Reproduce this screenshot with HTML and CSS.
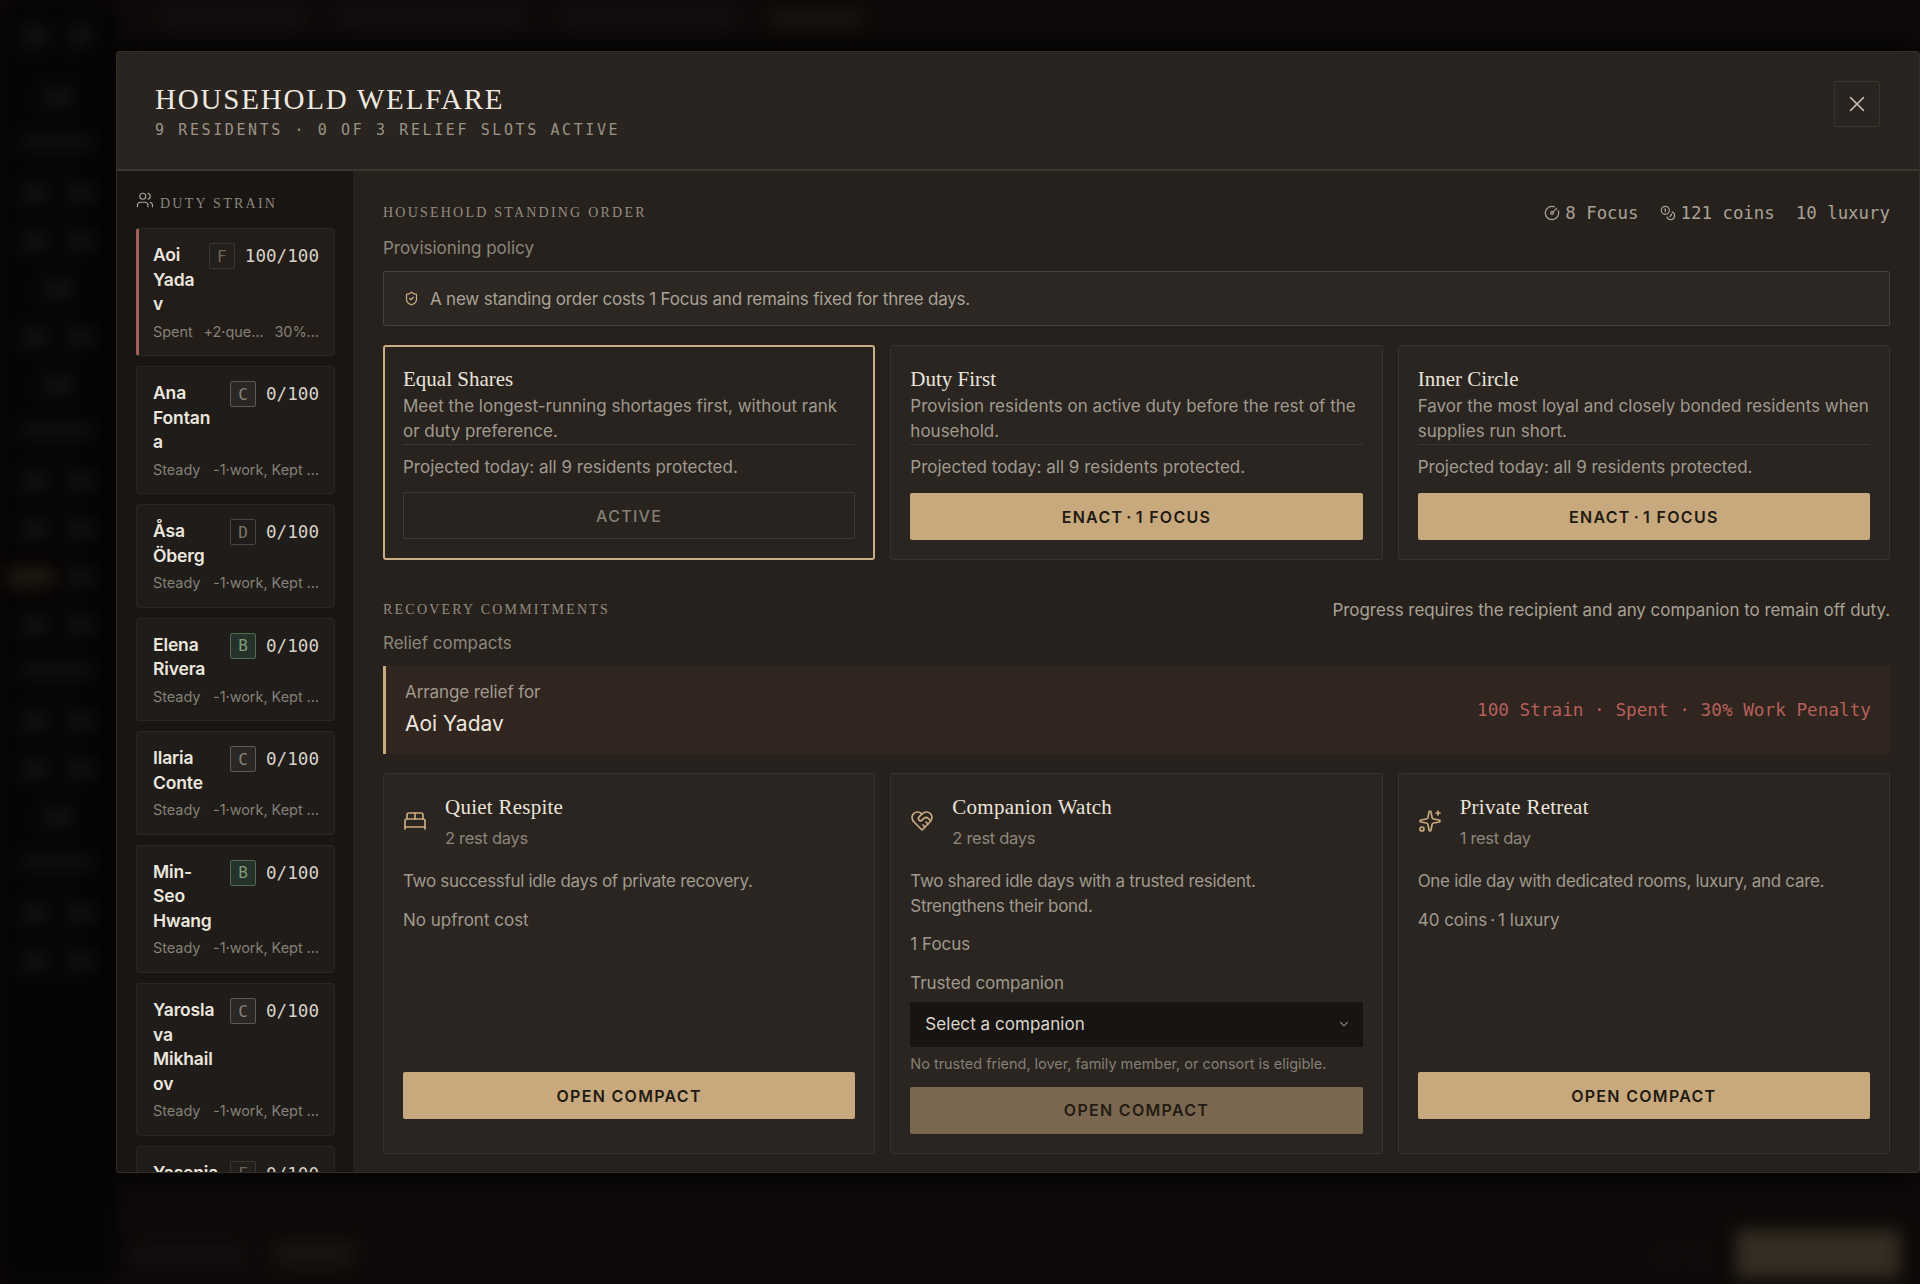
FILE: index.html
```html
<!DOCTYPE html>
<html lang="en">
<head>
<meta charset="utf-8">
<title>Household Welfare</title>
<link rel="stylesheet" href="styles.css">
</head>
<body>
<div class="backdrop" aria-hidden="true">
  <div class="rail">
    <div class="rail-row rail-first"><i class="blob"></i><i class="blob"></i></div>
    <div class="rail-row"><i class="blob center"></i></div>
    <div class="rail-row"><i class="blob wide"></i></div>
    <div class="rail-row"><i class="blob"></i><i class="blob"></i></div>
    <div class="rail-row"><i class="blob"></i><i class="blob"></i></div>
    <div class="rail-row"><i class="blob center"></i></div>
    <div class="rail-row"><i class="blob"></i><i class="blob"></i></div>
    <div class="rail-row"><i class="blob center"></i></div>
    <div class="rail-row"><i class="blob wide"></i></div>
    <div class="rail-row"><i class="blob"></i><i class="blob"></i></div>
    <div class="rail-row"><i class="blob"></i><i class="blob"></i></div>
    <div class="rail-row"><i class="blob amber"></i><i class="blob"></i></div>
    <div class="rail-row"><i class="blob"></i><i class="blob"></i></div>
    <div class="rail-row"><i class="blob wide"></i></div>
    <div class="rail-row"><i class="blob"></i><i class="blob"></i></div>
    <div class="rail-row"><i class="blob"></i><i class="blob"></i></div>
    <div class="rail-row"><i class="blob center"></i></div>
    <div class="rail-row"><i class="blob wide"></i></div>
    <div class="rail-row"><i class="blob"></i><i class="blob"></i></div>
    <div class="rail-row"><i class="blob"></i><i class="blob"></i></div>
  </div>
  <div class="page-behind">
    <div class="top-nav"><i class="bar n1"></i><i class="bar n2"></i><i class="bar n3"></i><i class="bar n4"></i></div>
    <div class="bottom-bar">
      <i class="bar b1"></i><i class="bar b2"></i>
      <span class="bottom-spacer"></span>
      <i class="bar b3"></i><i class="bar b3"></i><i class="bar b4"></i>
    </div>
  </div>
</div>

<section class="modal">
  <header class="modal-head">
    <div>
      <h1 class="modal-title">HOUSEHOLD WELFARE</h1>
      <p class="modal-sub">9 RESIDENTS · 0 OF 3 RELIEF SLOTS ACTIVE</p>
    </div>
    <button class="close" aria-label="Close">
      <svg class="ic ic-close" viewBox="0 0 24 24"><path d="M18 6 6 18"/><path d="m6 6 12 12"/></svg>
    </button>
  </header>
  <div class="modal-body">
    <aside class="side">
      <div class="side-head">
        <svg class="ic ic-users" viewBox="0 0 24 24"><path d="M16 21v-2a4 4 0 0 0-4-4H6a4 4 0 0 0-4 4v2"/><circle cx="9" cy="7" r="4"/><path d="M22 21v-2a4 4 0 0 0-3-3.87"/><path d="M16 3.13a4 4 0 0 1 0 7.75"/></svg>
        <span class="side-title">DUTY STRAIN</span>
      </div>
      <article class="res res-alert">
        <div class="res-top"><span class="res-name">Aoi<br>Yada<br>v</span><span class="grade grade-f">F</span><span class="res-val">100/100</span></div>
        <div class="res-meta"><span>Spent</span><span>+2·que...</span><span>30%...</span></div>
      </article>
      <article class="res">
        <div class="res-top"><span class="res-name">Ana<br>Fontan<br>a</span><span class="grade grade-c">C</span><span class="res-val">0/100</span></div>
        <div class="res-meta"><span>Steady</span><span>-1·work, Kept ...</span></div>
      </article>
      <article class="res">
        <div class="res-top"><span class="res-name">Åsa<br>Öberg</span><span class="grade grade-d">D</span><span class="res-val">0/100</span></div>
        <div class="res-meta"><span>Steady</span><span>-1·work, Kept ...</span></div>
      </article>
      <article class="res">
        <div class="res-top"><span class="res-name">Elena<br>Rivera</span><span class="grade grade-b">B</span><span class="res-val">0/100</span></div>
        <div class="res-meta"><span>Steady</span><span>-1·work, Kept ...</span></div>
      </article>
      <article class="res">
        <div class="res-top"><span class="res-name">Ilaria<br>Conte</span><span class="grade grade-c">C</span><span class="res-val">0/100</span></div>
        <div class="res-meta"><span>Steady</span><span>-1·work, Kept ...</span></div>
      </article>
      <article class="res">
        <div class="res-top"><span class="res-name">Min-<br>Seo<br>Hwang</span><span class="grade grade-b">B</span><span class="res-val">0/100</span></div>
        <div class="res-meta"><span>Steady</span><span>-1·work, Kept ...</span></div>
      </article>
      <article class="res">
        <div class="res-top"><span class="res-name">Yarosla<br>va<br>Mikhail<br>ov</span><span class="grade grade-c">C</span><span class="res-val">0/100</span></div>
        <div class="res-meta"><span>Steady</span><span>-1·work, Kept ...</span></div>
      </article>
      <article class="res">
        <div class="res-top"><span class="res-name">Yasenia</span><span class="grade grade-f">F</span><span class="res-val">0/100</span></div>
        <div class="res-meta"><span>Steady</span><span>-1·work, Kept ...</span></div>
      </article>
    </aside>

    <main class="main">
      <div class="sec-head">
        <h2 class="sec-label">HOUSEHOLD STANDING ORDER</h2>
        <div class="stats">
          <span class="stat"><svg class="ic ic-stat" viewBox="0 0 24 24"><path d="M15.6 2.7a10 10 0 1 0 5.7 5.7"/><circle cx="12" cy="12" r="2"/><path d="M13.4 10.6 19 5"/></svg>8 Focus</span>
          <span class="stat"><svg class="ic ic-stat" viewBox="0 0 24 24"><circle cx="8" cy="8" r="6"/><path d="M18.09 10.37A6 6 0 1 1 10.34 18"/><path d="M7 6h1v4"/><path d="m16.71 13.88.7.71-2.82 2.82"/></svg>121 coins</span>
          <span class="stat">10 luxury</span>
        </div>
      </div>
      <p class="sec-sub">Provisioning policy</p>
      <div class="notice">
        <svg class="ic ic-shield" viewBox="0 0 24 24"><path d="M20 13c0 5-3.5 7.5-7.66 8.95a1 1 0 0 1-.67-.01C7.5 20.5 4 18 4 13V6a1 1 0 0 1 1-1c2 0 4.5-1.2 6.24-2.72a1.17 1.17 0 0 1 1.52 0C14.51 3.81 17 5 19 5a1 1 0 0 1 1 1z"/><path d="m9 12 2 2 4-4"/></svg>
        <span>A new standing order costs 1 Focus and remains fixed for three days.</span>
      </div>

      <div class="cols orders">
        <article class="card order order-active">
          <h3 class="card-title">Equal Shares</h3>
          <p class="order-desc">Meet the longest-running shortages first, without rank or duty preference.</p>
          <p class="order-proj">Projected today: all 9 residents protected.</p>
          <div class="btn btn-ghost">ACTIVE</div>
        </article>
        <article class="card order">
          <h3 class="card-title">Duty First</h3>
          <p class="order-desc">Provision residents on active duty before the rest of the household.</p>
          <p class="order-proj">Projected today: all 9 residents protected.</p>
          <button class="btn">ENACT<span class="sep">·</span>1 FOCUS</button>
        </article>
        <article class="card order">
          <h3 class="card-title">Inner Circle</h3>
          <p class="order-desc">Favor the most loyal and closely bonded residents when supplies run short.</p>
          <p class="order-proj">Projected today: all 9 residents protected.</p>
          <button class="btn">ENACT<span class="sep">·</span>1 FOCUS</button>
        </article>
      </div>

      <div class="sec-head sec-head-2">
        <h2 class="sec-label">RECOVERY COMMITMENTS</h2>
        <p class="sec-note">Progress requires the recipient and any companion to remain off duty.</p>
      </div>
      <p class="sec-sub sec-sub-2">Relief compacts</p>
      <div class="banner">
        <div>
          <p class="banner-label">Arrange relief for</p>
          <p class="banner-name">Aoi Yadav</p>
        </div>
        <p class="banner-state">100 Strain · Spent · 30% Work Penalty</p>
      </div>

      <div class="cols compacts">
        <article class="card compact">
          <div class="compact-head">
            <svg class="ic ic-card" viewBox="0 0 24 24"><path d="M2 20v-8a2 2 0 0 1 2-2h16a2 2 0 0 1 2 2v8"/><path d="M4 10V6a2 2 0 0 1 2-2h12a2 2 0 0 1 2 2v4"/><path d="M12 4v6"/><path d="M2 18h20"/></svg>
            <div><h3 class="card-title compact-title">Quiet Respite</h3><p class="compact-days">2 rest days</p></div>
          </div>
          <p class="compact-text">Two successful idle days of private recovery.</p>
          <p class="compact-cost">No upfront cost</p>
          <button class="btn btn-end">OPEN COMPACT</button>
        </article>
        <article class="card compact">
          <div class="compact-head">
            <svg class="ic ic-card" viewBox="0 0 24 24"><path d="M19 14c1.49-1.46 3-3.21 3-5.5A5.5 5.5 0 0 0 16.5 3c-1.76 0-3 .5-4.5 2-1.5-1.5-2.74-2-4.5-2A5.5 5.5 0 0 0 2 8.5c0 2.3 1.5 4.05 3 5.5l7 7Z"/><path d="M12 5 9.04 7.96a2.17 2.17 0 0 0 0 3.08c.82.82 2.13.85 3 .07l2.07-1.9a2.82 2.82 0 0 1 3.79 0l2.96 2.66"/><path d="m18 15-2-2"/><path d="m15 18-2-2"/></svg>
            <div><h3 class="card-title compact-title">Companion Watch</h3><p class="compact-days">2 rest days</p></div>
          </div>
          <p class="compact-text">Two shared idle days with a trusted resident.<br>Strengthens their bond.</p>
          <p class="compact-cost">1 Focus</p>
          <p class="field-label">Trusted companion</p>
          <div class="select">
            <span>Select a companion</span>
            <svg class="ic ic-chev" viewBox="0 0 24 24"><path d="m6 9 6 6 6-6"/></svg>
          </div>
          <p class="field-help">No trusted friend, lover, family member, or consort is eligible.</p>
          <button class="btn btn-disabled">OPEN COMPACT</button>
        </article>
        <article class="card compact">
          <div class="compact-head">
            <svg class="ic ic-card" viewBox="0 0 24 24"><path d="M11.017 2.814a1 1 0 0 1 1.966 0l1.051 5.558a2 2 0 0 0 1.594 1.594l5.558 1.051a1 1 0 0 1 0 1.966l-5.558 1.051a2 2 0 0 0-1.594 1.594l-1.051 5.558a1 1 0 0 1-1.966 0l-1.051-5.558a2 2 0 0 0-1.594-1.594l-5.558-1.051a1 1 0 0 1 0-1.966l5.558-1.051a2 2 0 0 0 1.594-1.594z"/><path d="M20 2v4"/><path d="M22 4h-4"/><circle cx="4" cy="20" r="2"/></svg>
            <div><h3 class="card-title compact-title">Private Retreat</h3><p class="compact-days">1 rest day</p></div>
          </div>
          <p class="compact-text">One idle day with dedicated rooms, luxury, and care.</p>
          <p class="compact-cost">40 coins<span class="sep">·</span>1 luxury</p>
          <button class="btn btn-end">OPEN COMPACT</button>
        </article>
      </div>
    </main>
  </div>
</section>
</body>
</html>
```
FILE: styles.css
```css
* { box-sizing: border-box; }
html, body { margin: 0; height: 100%; }
body {
  width: 1920px;
  height: 1284px;
  overflow: hidden;
  background: #0d0a09;
  color: #e8e2d8;
  font-family: Inter, "Noto Sans", sans-serif;
  position: relative;
}
h1, h2, h3, p { margin: 0; font-weight: 400; }
button { font: inherit; border: 0; }
.sep { margin: 0 3px; }

/* blurred page behind the dialog */
.backdrop { display: flex; height: 100%; }
.rail {
  width: 116px;
  flex: none;
  background: #060404;
  padding: 22px 16px 0;
  display: flex;
  flex-direction: column;
  gap: 18px;
  filter: blur(8px);
}
.rail-row { display: flex; justify-content: space-between; height: 30px; padding: 4px 6px; }
.rail-first { margin-bottom: 13px; }
.blob { width: 26px; height: 20px; background: #131010; border-radius: 4px; display: block; }
.blob.wide { width: 100%; height: 14px; }
.blob.center { margin: 0 auto; width: 30px; }
.blob.amber { background: #1e1910; width: 46px; margin-left: -14px; }
.page-behind {
  flex: 1;
  display: flex;
  flex-direction: column;
  justify-content: space-between;
  filter: blur(8px);
}
.top-nav { display: flex; gap: 30px; padding: 12px 0 0 40px; }
.bar { display: block; height: 16px; background: #131110; }
.n1 { width: 150px; }
.n2 { width: 190px; }
.n3 { width: 184px; }
.n4 { width: 92px; background: #1b1610; }
.bottom-bar { display: flex; align-items: center; gap: 30px; height: 60px; padding: 0 20px 0 18px; }
.bottom-spacer { flex: 1; }
.b1 { width: 110px; }
.b2 { width: 80px; background: #171412; height: 26px; }
.b3 { width: 16px; margin-right: -12px; }
.b4 { width: 164px; height: 48px; background: #352c22; margin-left: 10px; }

/* dialog */
.modal {
  position: absolute;
  left: 116px;
  top: 51px;
  width: 1804px;
  height: 1122px;
  background: #26211d;
  border: 1px solid #33302b;
  border-radius: 3px;
  display: flex;
  flex-direction: column;
  overflow: hidden;
  box-shadow: 0 0 30px #000;
}
.modal-head {
  height: 119px;
  flex: none;
  padding: 30px 39px 0 38px;
  display: flex;
  justify-content: space-between;
  align-items: flex-start;
  background: #29241f;
  border-bottom: 2px solid #3b352f;
}
.modal-title {
  font-family: "Liberation Serif", serif;
  font-size: 29px;
  line-height: 34px;
  letter-spacing: 1.8px;
  color: #eee9e0;
}
.modal-sub {
  font-family: "DejaVu Sans Mono", monospace;
  font-size: 15px;
  line-height: 18px;
  letter-spacing: 2.6px;
  margin-top: 5px;
  color: #9a9388;
}
.close {
  width: 46px;
  height: 46px;
  margin-top: -1px;
  background: transparent;
  border: 1px solid #3a352f;
  border-radius: 2px;
  display: flex;
  align-items: center;
  justify-content: center;
  padding: 0;
}
.ic { fill: none; stroke: currentColor; stroke-width: 2; stroke-linecap: round; stroke-linejoin: round; flex: none; display: block; }
.ic-close { width: 26px; height: 26px; color: #c9c2b6; stroke-width: 1.4; }

.modal-body { flex: 1; min-height: 0; display: flex; }
.side {
  width: 237px;
  flex: none;
  background: #181513;
  border-right: 1px solid #26221e;
  padding: 20px 18px 0 19px;
  overflow: hidden;
  display: flex;
  flex-direction: column;
  gap: 10px;
}
.side > * { flex: none; }
.side-head { display: flex; align-items: flex-start; gap: 6px; height: 28px; color: #a9a296; margin-bottom: -1px; }
.ic-users { width: 18px; height: 18px; stroke-width: 1.6; }
.side-title {
  font-family: "Liberation Serif", serif;
  font-size: 14px;
  letter-spacing: 2.25px;
  line-height: 20px;
  margin-top: 3px;
  color: #8d867a;
}
.res {
  background: #201c19;
  border: 1px solid #2a2622;
  border-radius: 3px;
  padding: 14px 15px 13.6px 16px;
}
.res-alert { border-left: 3px solid #a8605f; padding-left: 14px; background: #231d1a; }
.res-top { display: flex; align-items: flex-start; gap: 10px; }
.res-name { flex: 1; min-width: 0; font-size: 17.5px; line-height: 24.5px; font-weight: 600; color: #ece7de; letter-spacing: -.15px; }
.grade {
  width: 26px;
  height: 26px;
  flex: none;
  display: flex;
  align-items: center;
  justify-content: center;
  font-family: "DejaVu Sans Mono", monospace;
  font-size: 16px;
  border: 1px solid #4a453e;
  border-radius: 2px;
  color: #8e887e;
}
.grade-f { border-color: #3b3630; background: #241f1b; color: #6f685e; }
.grade-c { border-color: #5e5a53; background: #2a2725; color: #88837a; }
.grade-d { border-color: #4a453e; background: #201c19; color: #7e786e; }
.grade-b { border-color: #4f6a4d; background: #25322a; color: #7d9a78; }
.res-val { font-family: "DejaVu Sans Mono", monospace; font-size: 17.6px; line-height: 26px; color: #d8d2c8; }
.res-meta {
  display: flex;
  justify-content: space-between;
  gap: 8px;
  margin-top: 4px;
  font-size: 14.5px;
  line-height: 21px;
  color: #858076;
  white-space: nowrap;
  letter-spacing: -.05px;
}

.main { flex: 1; min-width: 0; padding: 29px 29px 0; background: #26211d; }
.sec-head { display: flex; justify-content: space-between; align-items: center; height: 26px; }
.sec-label {
  font-family: "Liberation Serif", serif;
  font-size: 14px;
  letter-spacing: 2.22px;
  color: #948d80;
}
.stats { display: flex; gap: 21px; font-family: "DejaVu Sans Mono", monospace; font-size: 17.4px; color: #a9a296; }
.stat { display: flex; align-items: center; gap: 5px; }
.ic-stat { width: 16px; height: 16px; stroke-width: 1.8; }
.sec-sub { font-size: 17px; line-height: 26px; color: #8d867a; margin-top: 9px; }
.sec-sub-2 { margin-top: 7px; }
.notice {
  height: 55px;
  margin-top: 10px;
  border: 1px solid #47423b;
  border-radius: 2px;
  background: #2c2722;
  padding-left: 20px;
  display: flex;
  align-items: center;
  gap: 11px;
  font-size: 17px;
  letter-spacing: -.2px;
  color: #a9a296;
}
.ic-shield { width: 15px; height: 15px; color: #c8a97e; }
.cols { display: grid; grid-template-columns: repeat(3, 1fr); gap: 15px; }
.orders { margin-top: 19px; }
.card { background: #2a2521; border: 1px solid #38332d; border-radius: 3px; padding: 19px; }
.card-title { font-family: "Liberation Serif", serif; font-size: 21px; line-height: 28px; color: #eae4da; }
.compact-title { letter-spacing: .25px; }
.order { height: 215px; display: flex; flex-direction: column; padding-top: 19px; }
.order-active { border: 2px solid #c8ad86; padding: 18px 18px 19px; background: #28231f; }
.order-desc { font-size: 17px; line-height: 24.5px; color: #a09a8e; margin-top: 1px; padding-bottom: 1px; border-bottom: 1px solid #3a352f; }
.order-proj { font-size: 17px; line-height: 24px; color: #a09a8e; margin-top: 10px; }
.btn {
  display: flex;
  align-items: center;
  justify-content: center;
  width: 100%;
  height: 47px;
  flex: none;
  margin-top: auto;
  background: #c8a97e;
  color: #211a12;
  border-radius: 2px;
  font-size: 16px;
  font-weight: 600;
  letter-spacing: 1.3px;
  padding: 0;
  white-space: pre;
}
.btn-ghost { background: transparent; border: 1px solid #3f3a34; color: #857f74; font-weight: 500; }
.sec-head-2 { margin-top: 37px; }
.sec-note { font-size: 17px; color: #a9a296; letter-spacing: -.05px; }
.banner {
  height: 88px;
  margin-top: 10px;
  background: #30251f;
  border-left: 3px solid #c8a97e;
  padding: 0 19px 0 19px;
  display: flex;
  justify-content: space-between;
  align-items: center;
}
.banner-label { font-size: 17px; line-height: 24px; color: #a09a8e; letter-spacing: -.1px; }
.banner-name { font-size: 21px; line-height: 32px; color: #ece7de; margin-top: 4px; }
.banner-state { font-family: "DejaVu Sans Mono", monospace; font-size: 17.7px; color: #b5605a; }
.compacts { margin-top: 19px; }
.compact { height: 381px; display: flex; flex-direction: column; padding-top: 19px; }
.compact-head { display: flex; align-items: center; gap: 18px; color: #c8a97e; }
.ic-card { width: 24px; height: 24px; stroke-width: 1.7; margin-top: -2px; }
.compact-days { font-size: 16.5px; line-height: 24px; color: #8d867a; margin-top: 5px; letter-spacing: -.3px; }
.compact-text { font-size: 17px; line-height: 24.5px; color: #a09a8e; margin-top: 19px; letter-spacing: -.3px; }
.compact-cost { font-size: 17px; line-height: 24.5px; color: #a09a8e; margin-top: 14px; }
.field-label { font-size: 17px; line-height: 24px; color: #a09a8e; margin-top: 14px; letter-spacing: -.1px; }
.select {
  height: 45px;
  margin-top: 7px;
  background: #171412;
  color: #ddd7cd;
  border-radius: 1px;
  padding: 0 12px 0 15px;
  display: flex;
  justify-content: space-between;
  align-items: center;
  font-size: 17px;
  letter-spacing: .05px;
}
.ic-chev { width: 14px; height: 14px; color: #a9a296; stroke-width: 1.8; }
.field-help { font-size: 14.5px; line-height: 20px; color: #857f74; margin-top: 7px; letter-spacing: -.03px; }
.btn-disabled { background: #79674f; color: #241b12; margin-top: 13px; }
.btn-end { margin-bottom: 15px; }
```
